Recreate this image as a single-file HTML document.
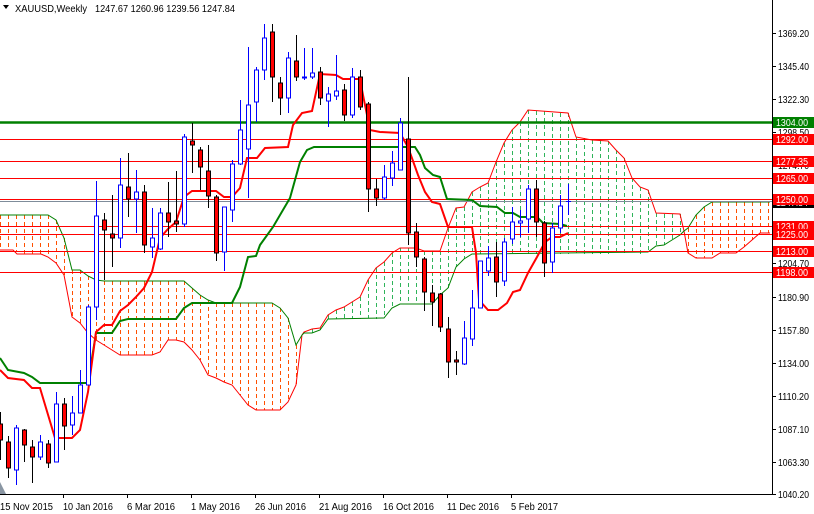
<!DOCTYPE html>
<html><head><meta charset="utf-8"><style>
html,body{margin:0;padding:0;background:#fff;}
svg{display:block;font-family:"Liberation Sans",sans-serif;}
.ho{stroke:#ff5000;stroke-width:1;stroke-dasharray:4 3;}
.hg{stroke:#2fb45a;stroke-width:1;stroke-dasharray:4 3;}
.wb{stroke:#0000ff;stroke-width:1;}
.wr{stroke:#000;stroke-width:1;}
.bb{fill:#fff;stroke:#0000ff;stroke-width:1;}
.br{fill:#ff0000;stroke:#000;stroke-width:1;}
.lv{stroke:#ff0000;stroke-width:1;}
.ax{font-size:10px;fill:#000;}
.lb{font-size:10px;fill:#fff;}
</style></head><body>
<svg width="814" height="514" viewBox="0 0 814 514" xmlns="http://www.w3.org/2000/svg">
<rect width="814" height="514" fill="#fff"/>

<!-- cloud hatch orange -->
<g class="ho">
<line x1="0.5" y1="215" x2="0.5" y2="250"/><line x1="8.5" y1="215" x2="8.5" y2="250"/><line x1="16.5" y1="215" x2="16.5" y2="252"/>
<line x1="24.5" y1="215" x2="24.5" y2="254"/><line x1="32.5" y1="215" x2="32.5" y2="254"/><line x1="40.5" y1="215" x2="40.5" y2="254"/>
<line x1="48.5" y1="215" x2="48.5" y2="257"/><line x1="56.5" y1="220" x2="56.5" y2="263"/><line x1="64.5" y1="238" x2="64.5" y2="275"/>
<line x1="72.5" y1="270" x2="72.5" y2="317"/><line x1="80.5" y1="270" x2="80.5" y2="323"/><line x1="88.5" y1="276" x2="88.5" y2="333"/>
<line x1="96.5" y1="280" x2="96.5" y2="340"/><line x1="104.5" y1="281" x2="104.5" y2="345"/><line x1="112.5" y1="281" x2="112.5" y2="350"/>
<line x1="120.5" y1="281" x2="120.5" y2="355"/><line x1="128.5" y1="281" x2="128.5" y2="355"/><line x1="136.5" y1="281" x2="136.5" y2="355"/>
<line x1="144.5" y1="281" x2="144.5" y2="355"/><line x1="152.5" y1="281" x2="152.5" y2="355"/><line x1="160.5" y1="281" x2="160.5" y2="352"/>
<line x1="168.5" y1="281" x2="168.5" y2="340"/><line x1="176.5" y1="281" x2="176.5" y2="340"/><line x1="184.5" y1="281" x2="184.5" y2="342"/>
<line x1="192.5" y1="288" x2="192.5" y2="350"/><line x1="200.5" y1="295" x2="200.5" y2="360"/><line x1="208.5" y1="300" x2="208.5" y2="375"/>
<line x1="216.5" y1="303" x2="216.5" y2="378"/><line x1="224.5" y1="303" x2="224.5" y2="382"/><line x1="232.5" y1="303" x2="232.5" y2="385"/>
<line x1="240.5" y1="303" x2="240.5" y2="395"/><line x1="248.5" y1="303" x2="248.5" y2="405"/><line x1="256.5" y1="303" x2="256.5" y2="410"/>
<line x1="264.5" y1="303" x2="264.5" y2="410"/><line x1="272.5" y1="303" x2="272.5" y2="410"/><line x1="280.5" y1="308" x2="280.5" y2="410"/>
<line x1="288.5" y1="318" x2="288.5" y2="402"/><line x1="296.5" y1="345" x2="296.5" y2="385"/>
<line x1="688.5" y1="228" x2="688.5" y2="253"/><line x1="696.5" y1="215" x2="696.5" y2="258"/><line x1="704.5" y1="207" x2="704.5" y2="258"/>
<line x1="712.5" y1="202" x2="712.5" y2="258"/><line x1="720.5" y1="202" x2="720.5" y2="253"/><line x1="728.5" y1="202" x2="728.5" y2="253"/>
<line x1="736.5" y1="202" x2="736.5" y2="253"/><line x1="744.5" y1="202" x2="744.5" y2="247"/><line x1="752.5" y1="202" x2="752.5" y2="240"/>
<line x1="760.5" y1="202" x2="760.5" y2="233"/><line x1="768.5" y1="202" x2="768.5" y2="233"/>
</g>
<!-- cloud hatch green -->
<g class="hg">
<line x1="304.5" y1="332" x2="304.5" y2="333"/><line x1="312.5" y1="329" x2="312.5" y2="333"/><line x1="320.5" y1="328" x2="320.5" y2="330"/>
<line x1="328.5" y1="315" x2="328.5" y2="319"/><line x1="336.5" y1="310" x2="336.5" y2="319"/><line x1="344.5" y1="307" x2="344.5" y2="319"/>
<line x1="352.5" y1="302" x2="352.5" y2="319"/><line x1="360.5" y1="297" x2="360.5" y2="319"/><line x1="368.5" y1="280" x2="368.5" y2="318"/>
<line x1="376.5" y1="268" x2="376.5" y2="319"/><line x1="384.5" y1="262" x2="384.5" y2="318"/><line x1="392.5" y1="253" x2="392.5" y2="308"/>
<line x1="400.5" y1="248" x2="400.5" y2="304"/><line x1="408.5" y1="248" x2="408.5" y2="304"/><line x1="416.5" y1="248" x2="416.5" y2="304"/>
<line x1="424.5" y1="251" x2="424.5" y2="304"/><line x1="432.5" y1="251" x2="432.5" y2="304"/><line x1="440.5" y1="251" x2="440.5" y2="295"/>
<line x1="448.5" y1="228" x2="448.5" y2="288"/><line x1="456.5" y1="208" x2="456.5" y2="267"/><line x1="464.5" y1="207" x2="464.5" y2="259"/>
<line x1="472.5" y1="192" x2="472.5" y2="254"/><line x1="480.5" y1="187" x2="480.5" y2="254"/><line x1="488.5" y1="183" x2="488.5" y2="254"/>
<line x1="496.5" y1="162" x2="496.5" y2="254"/><line x1="504.5" y1="143" x2="504.5" y2="254"/><line x1="512.5" y1="130" x2="512.5" y2="254"/>
<line x1="520.5" y1="122" x2="520.5" y2="254"/><line x1="528.5" y1="110" x2="528.5" y2="254"/><line x1="536.5" y1="111" x2="536.5" y2="254"/>
<line x1="544.5" y1="111" x2="544.5" y2="254"/><line x1="552.5" y1="113" x2="552.5" y2="254"/><line x1="560.5" y1="113" x2="560.5" y2="254"/>
<line x1="568.5" y1="113" x2="568.5" y2="254"/><line x1="576.5" y1="137" x2="576.5" y2="254"/><line x1="584.5" y1="138" x2="584.5" y2="254"/>
<line x1="592.5" y1="140" x2="592.5" y2="254"/><line x1="600.5" y1="140" x2="600.5" y2="254"/><line x1="608.5" y1="141" x2="608.5" y2="254"/>
<line x1="616.5" y1="150" x2="616.5" y2="254"/><line x1="624.5" y1="158" x2="624.5" y2="254"/><line x1="632.5" y1="178" x2="632.5" y2="254"/>
<line x1="640.5" y1="187" x2="640.5" y2="254"/><line x1="648.5" y1="190" x2="648.5" y2="252"/><line x1="656.5" y1="213" x2="656.5" y2="246"/>
<line x1="664.5" y1="214" x2="664.5" y2="245"/><line x1="672.5" y1="214" x2="672.5" y2="240"/><line x1="680.5" y1="214" x2="680.5" y2="235"/>
</g>
<!-- span A (red thin) -->
<polyline fill="none" stroke="#ff0000" stroke-width="1" points="0,250 13,250 17,254 41,254 48,257 56,263 64,275 72,317 80,323 88,333 96,340 104,345 112,350 120,355 152,355 160,352 168,340 176,340 184,342 192,350 200,360 208,375 216,378 224,382 232,385 240,395 248,405 256,410 280,410 288,402 296,385 302,335 304,332 312,329 320,328 328,315 336,310 344,307 352,302 360,297 368,280 376,268 384,262 392,253 400,248 416,248 424,251 440,251 448,228 456,208 464,207 472,192 480,187 488,183 496,162 504,143 512,130 520,122 528,110 568,113 576,137 592,140 608,141 616,150 624,158 632,178 640,187 648,190 656,213 680,214 684,231 688,253 696,258 712,258 720,253 736,253 744,247 752,240 760,233 770,233"/>
<!-- span B (green thin) -->
<polyline fill="none" stroke="#008000" stroke-width="1" points="0,215 48,215 56,220 64,238 72,270 80,270 88,276 96,280 104,281 184,281 192,288 200,295 208,300 216,303 272,303 280,308 288,318 296,345 302,335 304,333 312,333 320,330 328,319 384,318 392,308 400,304 432,304 440,295 448,288 456,267 464,259 472,254 648,252 656,246 664,245 672,240 680,235 684,231 688,228 696,215 704,207 712,202 770,202"/>

<!-- horizontal levels -->
<line x1="0" y1="201.5" x2="772" y2="201.5" stroke="#7f8c9a" stroke-width="1"/>
<line class="lv" x1="0" y1="139.5" x2="772" y2="139.5"/>
<line class="lv" x1="0" y1="161.5" x2="772" y2="161.5"/>
<line class="lv" x1="0" y1="178.5" x2="772" y2="178.5"/>
<line class="lv" x1="0" y1="199.5" x2="772" y2="199.5"/>
<line class="lv" x1="0" y1="226.5" x2="772" y2="226.5"/>
<line class="lv" x1="0" y1="234.5" x2="772" y2="234.5"/>
<line class="lv" x1="0" y1="251.5" x2="772" y2="251.5"/>
<line class="lv" x1="0" y1="272.5" x2="772" y2="272.5"/>
<line x1="0" y1="122.5" x2="772" y2="122.5" stroke="#008000" stroke-width="2.5"/>

<!-- kijun / tenkan -->
<polyline fill="none" stroke="#008000" stroke-width="2" points="0,358 8,370 24,373 32,377 40,383 88,383 96,333 112,333 120,321 128,319 176,319 184,308 192,303 232,303 240,287 248,257 256,256 260,245 273,227 290,198 300,162 307,150 314,147 415,147 420,155 425,168 433,175 440,177 447,199 472,200 480,206 497,207 505,213 513,213 520,217 537,217 543,223 560,224 567,226"/>
<polyline fill="none" stroke="#ff0000" stroke-width="2" points="0,370 8,378 24,380 32,388 40,388 55,438 72,438 80,430 88,392 96,332 104,325 112,325 120,311 128,305 136,297 144,288 152,272 160,238 168,229 176,222 184,197 192,191 216,191 224,197 232,197 240,188 247,158 257,158 265,148 288,147 293,125 302,113 312,111 320,74 336,75 343,79 360,79 363,95 370,130 380,132 400,133 408,147 418,175 425,192 432,202 440,204 448,227 472,227 476,253 479,300 488,310 498,310 507,303 513,292 520,290 528,273 537,257 545,242 552,237 560,237 568,233"/>

<!-- candles -->
<g>
<line class="wr" x1="0.5" y1="412" x2="0.5" y2="460"/><rect class="br" x="-1.5" y="424" width="4" height="16"/>
<line class="wr" x1="8.5" y1="436" x2="8.5" y2="478"/><rect class="br" x="6.5" y="442" width="4" height="26"/>
<line class="wb" x1="16.5" y1="425" x2="16.5" y2="485"/><rect class="bb" x="14.5" y="428" width="4" height="42"/>
<line class="wr" x1="24.5" y1="429" x2="24.5" y2="462"/><rect class="br" x="22.5" y="430" width="4" height="15"/>
<line class="wr" x1="32.5" y1="440" x2="32.5" y2="483"/><rect class="br" x="30.5" y="447" width="4" height="10"/>
<line class="wb" x1="40.5" y1="435" x2="40.5" y2="460"/><rect class="bb" x="38.5" y="442" width="4" height="15"/>
<line class="wr" x1="48.5" y1="440" x2="48.5" y2="468"/><rect class="br" x="46.5" y="444" width="4" height="19"/>
<line class="wb" x1="56.5" y1="392" x2="56.5" y2="462"/><rect class="bb" x="54.5" y="404" width="4" height="58"/>
<line class="wr" x1="64.5" y1="398" x2="64.5" y2="450"/><rect class="br" x="62.5" y="404" width="4" height="22"/>
<line class="wb" x1="72.5" y1="396" x2="72.5" y2="435"/><rect class="bb" x="70.5" y="413" width="4" height="12"/>
<line class="wb" x1="80.5" y1="370" x2="80.5" y2="413"/><rect class="bb" x="78.5" y="385" width="4" height="28"/>
<line class="wb" x1="88.5" y1="305" x2="88.5" y2="385"/><rect class="bb" x="86.5" y="307" width="4" height="78"/>
<line class="wb" x1="96.5" y1="181" x2="96.5" y2="320"/><rect class="bb" x="94.5" y="216" width="4" height="91"/>
<line class="wr" x1="104.5" y1="213" x2="104.5" y2="280"/><rect class="br" x="102.5" y="220" width="4" height="10"/>
<line class="wr" x1="112.5" y1="195" x2="112.5" y2="267"/><rect class="br" x="110.5" y="234" width="4" height="4"/>
<line class="wb" x1="120.5" y1="158" x2="120.5" y2="248"/><rect class="bb" x="118.5" y="185" width="4" height="53"/>
<line class="wr" x1="128.5" y1="153" x2="128.5" y2="217"/><rect class="br" x="126.5" y="187" width="4" height="12"/>
<line class="wb" x1="136.5" y1="170" x2="136.5" y2="233"/><rect class="bb" x="134.5" y="192" width="4" height="7"/>
<line class="wr" x1="144.5" y1="185" x2="144.5" y2="253"/><rect class="br" x="142.5" y="192" width="4" height="53"/>
<line class="wb" x1="152.5" y1="208" x2="152.5" y2="258"/><rect class="bb" x="150.5" y="238" width="4" height="9"/>
<line class="wb" x1="160.5" y1="208" x2="160.5" y2="250"/><rect class="bb" x="158.5" y="213" width="4" height="36"/>
<line class="wr" x1="168.5" y1="182" x2="168.5" y2="237"/><rect class="br" x="166.5" y="213" width="4" height="9"/>
<line class="wr" x1="176.5" y1="171" x2="176.5" y2="232"/><rect class="br" x="174.5" y="221" width="4" height="3"/>
<line class="wb" x1="184.5" y1="134" x2="184.5" y2="227"/><rect class="bb" x="182.5" y="137" width="4" height="87"/>
<line class="wr" x1="192.5" y1="123" x2="192.5" y2="173"/><rect class="br" x="190.5" y="141" width="4" height="4"/>
<line class="wr" x1="200.5" y1="147" x2="200.5" y2="190"/><rect class="br" x="198.5" y="150" width="4" height="17"/>
<line class="wr" x1="208.5" y1="145" x2="208.5" y2="208"/><rect class="br" x="206.5" y="171" width="4" height="25"/>
<line class="wr" x1="216.5" y1="195" x2="216.5" y2="261"/><rect class="br" x="214.5" y="197" width="4" height="56"/>
<line class="wb" x1="224.5" y1="207" x2="224.5" y2="271"/><rect class="bb" x="222.5" y="207" width="4" height="45"/>
<line class="wb" x1="232.5" y1="160" x2="232.5" y2="222"/><rect class="bb" x="230.5" y="164" width="4" height="46"/>
<line class="wb" x1="240.5" y1="100" x2="240.5" y2="165"/><rect class="bb" x="238.5" y="130" width="4" height="34"/>
<line class="wb" x1="248.5" y1="47" x2="248.5" y2="198"/><rect class="bb" x="246.5" y="105" width="4" height="44"/>
<line class="wb" x1="256.5" y1="67" x2="256.5" y2="122"/><rect class="bb" x="254.5" y="70" width="4" height="32"/>
<line class="wb" x1="264.5" y1="24" x2="264.5" y2="80"/><rect class="bb" x="262.5" y="38" width="4" height="32"/>
<line class="wr" x1="272.5" y1="24" x2="272.5" y2="102"/><rect class="br" x="270.5" y="32" width="4" height="45"/>
<line class="wr" x1="280.5" y1="77" x2="280.5" y2="115"/><rect class="br" x="278.5" y="83" width="4" height="15"/>
<line class="wb" x1="288.5" y1="52" x2="288.5" y2="113"/><rect class="bb" x="286.5" y="58" width="4" height="40"/>
<line class="wr" x1="296.5" y1="35" x2="296.5" y2="81"/><rect class="br" x="294.5" y="61" width="4" height="16"/>
<line class="wb" x1="304.5" y1="48" x2="304.5" y2="80"/><rect class="bb" x="302.5" y="77" width="4" height="1"/>
<line class="wb" x1="312.5" y1="48" x2="312.5" y2="79"/><rect class="bb" x="310.5" y="73" width="4" height="4"/>
<line class="wr" x1="320.5" y1="67" x2="320.5" y2="105"/><rect class="br" x="318.5" y="72" width="4" height="26"/>
<line class="wb" x1="328.5" y1="87" x2="328.5" y2="127"/><rect class="bb" x="326.5" y="94" width="4" height="7"/>
<line class="wb" x1="336.5" y1="55" x2="336.5" y2="100"/><rect class="bb" x="334.5" y="91" width="4" height="5"/>
<line class="wr" x1="344.5" y1="84" x2="344.5" y2="121"/><rect class="br" x="342.5" y="90" width="4" height="25"/>
<line class="wb" x1="352.5" y1="68" x2="352.5" y2="118"/><rect class="bb" x="350.5" y="77" width="4" height="38"/>
<line class="wr" x1="360.5" y1="70" x2="360.5" y2="110"/><rect class="br" x="358.5" y="77" width="4" height="30"/>
<line class="wr" x1="368.5" y1="102" x2="368.5" y2="212"/><rect class="br" x="366.5" y="104" width="4" height="85"/>
<line class="wr" x1="376.5" y1="179" x2="376.5" y2="206"/><rect class="br" x="374.5" y="189" width="4" height="9"/>
<line class="wb" x1="384.5" y1="165" x2="384.5" y2="200"/><rect class="bb" x="382.5" y="177" width="4" height="21"/>
<line class="wb" x1="392.5" y1="151" x2="392.5" y2="186"/><rect class="bb" x="390.5" y="163" width="4" height="15"/>
<line class="wb" x1="400.5" y1="118" x2="400.5" y2="170"/><rect class="bb" x="398.5" y="123" width="4" height="47"/>
<line class="wr" x1="408.5" y1="77" x2="408.5" y2="245"/><rect class="br" x="406.5" y="139" width="4" height="94"/>
<line class="wr" x1="416.5" y1="223" x2="416.5" y2="267"/><rect class="br" x="414.5" y="232" width="4" height="25"/>
<line class="wr" x1="424.5" y1="257" x2="424.5" y2="311"/><rect class="br" x="422.5" y="259" width="4" height="33"/>
<line class="wr" x1="432.5" y1="285" x2="432.5" y2="326"/><rect class="br" x="430.5" y="293" width="4" height="9"/>
<line class="wr" x1="440.5" y1="293" x2="440.5" y2="332"/><rect class="br" x="438.5" y="294" width="4" height="33"/>
<line class="wr" x1="448.5" y1="317" x2="448.5" y2="378"/><rect class="br" x="446.5" y="329" width="4" height="33"/>
<line class="wr" x1="456.5" y1="351" x2="456.5" y2="375"/><rect class="br" x="454.5" y="360" width="4" height="2"/>
<line class="wb" x1="464.5" y1="321" x2="464.5" y2="365"/><rect class="bb" x="462.5" y="338" width="4" height="26"/>
<line class="wb" x1="472.5" y1="290" x2="472.5" y2="346"/><rect class="bb" x="470.5" y="308" width="4" height="31"/>
<line class="wb" x1="480.5" y1="261" x2="480.5" y2="308"/><rect class="bb" x="478.5" y="261" width="4" height="47"/>
<line class="wb" x1="488.5" y1="246" x2="488.5" y2="276"/><rect class="bb" x="486.5" y="258" width="4" height="13"/>
<line class="wr" x1="496.5" y1="242" x2="496.5" y2="297"/><rect class="br" x="494.5" y="257" width="4" height="25"/>
<line class="wb" x1="504.5" y1="238" x2="504.5" y2="286"/><rect class="bb" x="502.5" y="242" width="4" height="39"/>
<line class="wb" x1="512.5" y1="207" x2="512.5" y2="244"/><rect class="bb" x="510.5" y="222" width="4" height="17"/>
<line class="wb" x1="520.5" y1="210" x2="520.5" y2="237"/><rect class="bb" x="518.5" y="221" width="4" height="2"/>
<line class="wb" x1="528.5" y1="185" x2="528.5" y2="233"/><rect class="bb" x="526.5" y="189" width="4" height="30"/>
<line class="wr" x1="536.5" y1="180" x2="536.5" y2="237"/><rect class="br" x="534.5" y="189" width="4" height="33"/>
<line class="wr" x1="544.5" y1="221" x2="544.5" y2="277"/><rect class="br" x="542.5" y="223" width="4" height="40"/>
<line class="wb" x1="552.5" y1="223" x2="552.5" y2="273"/><rect class="bb" x="550.5" y="228" width="4" height="34"/>
<line class="wb" x1="560.5" y1="195" x2="560.5" y2="233"/><rect class="bb" x="558.5" y="206" width="4" height="22"/>
<line class="wb" x1="568.5" y1="184" x2="568.5" y2="215"/><line class="wb" x1="566" y1="201.5" x2="571" y2="201.5"/>
</g>

<!-- title -->
<path d="M3,5 L9,5 L6,9 Z" fill="#000"/>
<text x="15" y="12" font-size="10" textLength="72" lengthAdjust="spacingAndGlyphs">XAUUSD,Weekly</text>
<text x="95" y="12" font-size="10" textLength="140" lengthAdjust="spacingAndGlyphs">1247.67 1260.96 1239.56 1247.84</text>

<!-- axes -->
<rect x="0" y="0" width="814" height="514" fill="none"/>
<line x1="772.5" y1="0" x2="772.5" y2="495" stroke="#000" stroke-width="1"/>
<line x1="0" y1="494.5" x2="773" y2="494.5" stroke="#000" stroke-width="1"/>
<path d="M0,482 L6,494 L0,494 Z" fill="#8a96a3"/>
<g stroke="#000" stroke-width="1">
<line x1="772" y1="33.5" x2="776" y2="33.5"/><line x1="772" y1="66.5" x2="776" y2="66.5"/><line x1="772" y1="99.5" x2="776" y2="99.5"/>
<line x1="772" y1="132.5" x2="776" y2="132.5"/><line x1="772" y1="165.5" x2="776" y2="165.5"/><line x1="772" y1="198.5" x2="776" y2="198.5"/>
<line x1="772" y1="231.5" x2="776" y2="231.5"/><line x1="772" y1="263.5" x2="776" y2="263.5"/><line x1="772" y1="297.5" x2="776" y2="297.5"/>
<line x1="772" y1="330.5" x2="776" y2="330.5"/><line x1="772" y1="363.5" x2="776" y2="363.5"/><line x1="772" y1="396.5" x2="776" y2="396.5"/>
<line x1="772" y1="429.5" x2="776" y2="429.5"/><line x1="772" y1="462.5" x2="776" y2="462.5"/><line x1="772" y1="494.5" x2="776" y2="494.5"/>
<line x1="63.5" y1="494" x2="63.5" y2="498"/><line x1="127.5" y1="494" x2="127.5" y2="498"/><line x1="191.5" y1="494" x2="191.5" y2="498"/>
<line x1="255.5" y1="494" x2="255.5" y2="498"/><line x1="319.5" y1="494" x2="319.5" y2="498"/><line x1="383.5" y1="494" x2="383.5" y2="498"/>
<line x1="447.5" y1="494" x2="447.5" y2="498"/><line x1="511.5" y1="494" x2="511.5" y2="498"/>
</g>
<g class="ax">
<text x="778" y="37" textLength="31" lengthAdjust="spacingAndGlyphs">1369.20</text>
<text x="778" y="70" textLength="31" lengthAdjust="spacingAndGlyphs">1345.40</text>
<text x="778" y="103" textLength="31" lengthAdjust="spacingAndGlyphs">1322.30</text>
<text x="778" y="136" textLength="31" lengthAdjust="spacingAndGlyphs">1298.50</text>
<text x="778" y="169" textLength="31" lengthAdjust="spacingAndGlyphs">1274.70</text>
<text x="778" y="202" textLength="31" lengthAdjust="spacingAndGlyphs">1251.60</text>
<text x="778" y="235" textLength="31" lengthAdjust="spacingAndGlyphs">1228.00</text>
<text x="778" y="267" textLength="31" lengthAdjust="spacingAndGlyphs">1204.70</text>
<text x="778" y="301" textLength="31" lengthAdjust="spacingAndGlyphs">1180.90</text>
<text x="778" y="334" textLength="31" lengthAdjust="spacingAndGlyphs">1157.80</text>
<text x="778" y="367" textLength="31" lengthAdjust="spacingAndGlyphs">1134.00</text>
<text x="778" y="400" textLength="31" lengthAdjust="spacingAndGlyphs">1110.20</text>
<text x="778" y="433" textLength="31" lengthAdjust="spacingAndGlyphs">1087.10</text>
<text x="778" y="466" textLength="31" lengthAdjust="spacingAndGlyphs">1063.30</text>
<text x="778" y="498" textLength="31" lengthAdjust="spacingAndGlyphs">1040.20</text>
<text x="0" y="510" textLength="53" lengthAdjust="spacingAndGlyphs">15 Nov 2015</text>
<text x="63" y="510" textLength="50" lengthAdjust="spacingAndGlyphs">10 Jan 2016</text>
<text x="127" y="510" textLength="48" lengthAdjust="spacingAndGlyphs">6 Mar 2016</text>
<text x="191" y="510" textLength="49" lengthAdjust="spacingAndGlyphs">1 May 2016</text>
<text x="255" y="510" textLength="51" lengthAdjust="spacingAndGlyphs">26 Jun 2016</text>
<text x="319" y="510" textLength="53" lengthAdjust="spacingAndGlyphs">21 Aug 2016</text>
<text x="383" y="510" textLength="51" lengthAdjust="spacingAndGlyphs">16 Oct 2016</text>
<text x="447" y="510" textLength="52" lengthAdjust="spacingAndGlyphs">11 Dec 2016</text>
<text x="511" y="510" textLength="47" lengthAdjust="spacingAndGlyphs">5 Feb 2017</text>
</g>

<!-- price label boxes -->
<rect x="773" y="117" width="41" height="11" fill="#008000"/><text class="lb" x="776" y="126" textLength="32" lengthAdjust="spacingAndGlyphs">1304.00</text>
<rect x="773" y="134" width="41" height="11" fill="#ff0000"/><text class="lb" x="776" y="143" textLength="32" lengthAdjust="spacingAndGlyphs">1292.00</text>
<rect x="773" y="156" width="41" height="11" fill="#ff0000"/><text class="lb" x="776" y="165" textLength="32" lengthAdjust="spacingAndGlyphs">1277.35</text>
<rect x="773" y="173" width="41" height="11" fill="#ff0000"/><text class="lb" x="776" y="182" textLength="32" lengthAdjust="spacingAndGlyphs">1265.00</text>
<rect x="773" y="197" width="41" height="11" fill="#000"/><text class="lb" x="776" y="206" textLength="32" lengthAdjust="spacingAndGlyphs">1247.84</text>
<rect x="773" y="194" width="41" height="11" fill="#ff0000"/><text class="lb" x="776" y="203" textLength="32" lengthAdjust="spacingAndGlyphs">1250.00</text>
<rect x="773" y="221" width="41" height="11" fill="#ff0000"/><text class="lb" x="776" y="230" textLength="32" lengthAdjust="spacingAndGlyphs">1231.00</text>
<rect x="773" y="229" width="41" height="11" fill="#ff0000"/><text class="lb" x="776" y="238" textLength="32" lengthAdjust="spacingAndGlyphs">1225.00</text>
<rect x="773" y="246" width="41" height="11" fill="#ff0000"/><text class="lb" x="776" y="255" textLength="32" lengthAdjust="spacingAndGlyphs">1213.00</text>
<rect x="773" y="267" width="41" height="11" fill="#ff0000"/><text class="lb" x="776" y="276" textLength="32" lengthAdjust="spacingAndGlyphs">1198.00</text>
</svg>
</body></html>
